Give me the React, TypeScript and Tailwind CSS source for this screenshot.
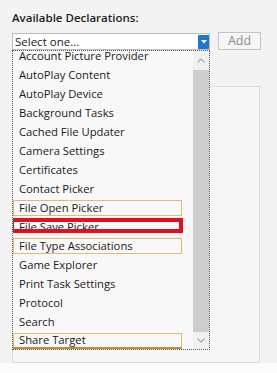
import React from "react";

const items = [
  "Account Picture Provider",
  "AutoPlay Content",
  "AutoPlay Device",
  "Background Tasks",
  "Cached File Updater",
  "Camera Settings",
  "Certificates",
  "Contact Picker",
  "File Open Picker",
  "File Save Picker",
  "File Type Associations",
  "Game Explorer",
  "Print Task Settings",
  "Protocol",
  "Search",
  "Share Target",
];

const boxed = ["File Open Picker", "File Type Associations", "Share Target"];

export default function App() {
  return (
    <div
      className="relative w-[277px] h-[373px] overflow-hidden bg-[#f3f3f3] text-[#1a1a1a]"
      style={{ fontFamily: '"Open Sans", "Noto Sans", sans-serif' }}
    >
      <div className="px-[12px] pt-[9px]">
        <h1 className="text-[11.5px] font-semibold leading-[18px] text-[#1e1e1e]">Available Declarations:</h1>

        <div className="mt-[6px] flex items-start">
          <div className="flex h-[17px] w-[198px] items-center border border-[#bdbdbd] bg-white">
            <span className="flex-1 pl-[2px] text-[11.5px] leading-none">Select one...</span>
            <span className="flex h-[14px] w-[11px] items-center justify-center bg-[#1e78d2]">
              <svg width="6" height="4" viewBox="0 0 6 4">
                <path d="M0 0 L6 0 L3 3.5 Z" fill="#fff" />
              </svg>
            </span>
          </div>
          <button className="ml-[8px] -mt-[1px] flex h-[18px] w-[43px] items-center justify-center border border-[#c4c4c4] bg-[#f6f6f6] text-[12.5px] text-[#8c8c8c]">
            Add
          </button>
        </div>

        <div className="mt-[36px] h-[277px] w-[248px] border border-[#dadada] bg-[#f7f7f7]" />
      </div>
      <div className="h-[12px] bg-[#fcfcfc]" />

      {/* open dropdown list */}
      <div className="absolute left-[12px] top-[50px] flex h-[300px] w-[198px] border border-dotted border-[#555] bg-[#f8f8f8]">
        <div className="relative flex-1 overflow-hidden">
          <div className="-mt-[5px] flex flex-col">
            {items.map((name) => {
              const isBox = boxed.includes(name);
              const isRed = name === "File Save Picker";
              return (
                <div key={name} className="relative flex h-[19px] items-center text-[11.25px] leading-none">
                  {isBox ? (
                    <div
                      className={`flex h-[16px] w-[169px] items-center border border-[#e4b96c] pl-[5px] ${
                        name === "Share Target" ? "border-b-2 border-b-[#c08a3a]" : ""
                      }`}
                    >
                      {name}
                    </div>
                  ) : (
                    <span className="pl-[6px]">{name}</span>
                  )}
                  {isRed && (
                    <div className="absolute left-[-3px] top-[1px] h-[15px] w-[173px] border-[4px] border-[#e3101b]" />
                  )}
                </div>
              );
            })}
          </div>
        </div>
        <div className="flex w-[16px] flex-col bg-[#f0f0f0]">
          <div className="flex h-[19px] items-center justify-center">
            <svg width="8" height="5" viewBox="0 0 8 5">
              <path d="M0.5 4.5 L4 1 L7.5 4.5" stroke="#a8a8a8" strokeWidth="1.2" fill="none" />
            </svg>
          </div>
          <div className="flex-1 bg-[#cdcdcd]" />
          <div className="flex h-[17px] items-center justify-center">
            <svg width="8" height="5" viewBox="0 0 8 5">
              <path d="M0.5 0.5 L4 4 L7.5 0.5" stroke="#a8a8a8" strokeWidth="1.2" fill="none" />
            </svg>
          </div>
        </div>
      </div>
    </div>
  );
}
